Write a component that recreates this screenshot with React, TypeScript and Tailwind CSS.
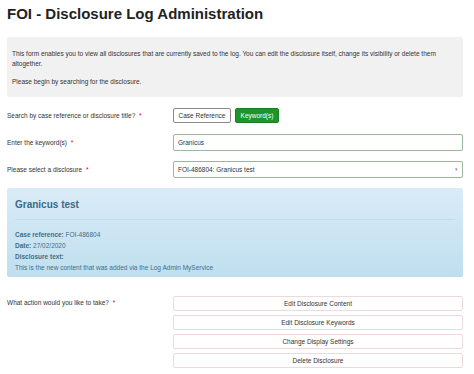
import React from "react";

const actions = [
  "Edit Disclosure Content",
  "Edit Disclosure Keywords",
  "Change Display Settings",
  "Delete Disclosure",
];

function Label({ children }: { children: React.ReactNode }) {
  return (
    <div className="w-[166px] shrink-0 text-[6.5px] text-[#333]">
      {children} <span className="ml-[2px] text-[#d0021b]">*</span>
    </div>
  );
}

export default function App() {
  return (
    <div
      className="h-[374px] w-[474px] overflow-hidden bg-white px-[7px] pt-[4px]"
      style={{ fontFamily: '"Liberation Sans", Arial, sans-serif' }}
    >
      <h1 className="text-[15px] font-bold leading-[20px] text-[#222]">
        FOI - Disclosure Log Administration
      </h1>

      <div className="mt-[13px] h-[60px] w-[456px] rounded-[2px] bg-[#f1f1f1] px-[5px] pt-[12px] text-[6.5px] leading-[10px] text-[#333]">
        <p>
          This form enables you to view all disclosures that are currently saved to the log. You can
          edit the disclosure itself, change its visibility or delete them altogether.
        </p>
        <p className="mt-[8px]">Please begin by searching for the disclosure.</p>
      </div>

      <div className="mt-[11px] flex items-center">
        <Label>Search by case reference or disclosure title?</Label>
        <div className="flex gap-[4px]">
          <button className="h-[15px] w-[58px] rounded-[2px] border border-[#8a8a8a] bg-white text-[6.5px] text-[#333]">
            Case Reference
          </button>
          <button className="h-[15px] w-[44px] rounded-[2px] border border-[#1a7f22] bg-[#1e9429] text-[6.5px] text-white">
            Keyword(s)
          </button>
        </div>
      </div>

      <div className="mt-[11px] flex items-center">
        <Label>Enter the keyword(s)</Label>
        <div className="flex h-[17px] w-[290px] items-center rounded-[2px] border border-[#9ab79a] bg-white px-[4px] text-[6.5px] text-[#333]">
          Granicus
        </div>
      </div>

      <div className="mt-[10px] flex items-center">
        <Label>Please select a disclosure</Label>
        <div className="flex h-[17px] w-[290px] items-center justify-between rounded-[2px] border border-[#9ab79a] bg-white px-[4px] text-[6.5px] text-[#333]">
          <span>FOI-486804: Granicus test</span>
          <span className="text-[5px] text-[#888]">▾</span>
        </div>
      </div>

      <div className="mt-[10px] h-[89px] w-[456px] rounded-[2px] bg-gradient-to-b from-[#daebf7] to-[#bfdfee] px-[8px] pt-[10px] text-[6.5px] text-[#3e6f8d]">
        <div className="text-[10px] font-bold leading-[13px] text-[#3a6b8a]">Granicus test</div>
        <div className="mt-[8px] border-t border-[#c4dced]" />
        <div className="mt-[9px] leading-[11px]">
          <div>
            <b>Case reference:</b> FOI-486804
          </div>
          <div>
            <b>Date:</b> 27/02/2020
          </div>
          <div>
            <b>Disclosure text:</b>
          </div>
          <div>This is the new content that was added via the Log Admin MyService</div>
        </div>
      </div>

      <div className="mt-[19px] flex items-start">
        <div className="pt-[2px]">
          <Label>What action would you like to take?</Label>
        </div>
        <div className="flex w-[290px] flex-col gap-[4px]">
          {actions.map((a) => (
            <button
              key={a}
              className="h-[15px] rounded-[2px] border border-[#ecdadd] bg-white text-[6.5px] text-[#333]"
            >
              {a}
            </button>
          ))}
        </div>
      </div>
    </div>
  );
}
